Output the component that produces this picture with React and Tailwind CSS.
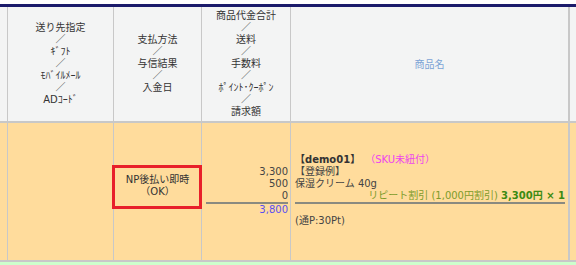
import React from 'react';

const headCols = [
  ['送り先指定', '／', 'ｷﾞﾌﾄ', '／', 'ﾓﾊﾞｲﾙﾒｰﾙ', '／', 'ADｺｰﾄﾞ'],
  ['支払方法', '／', '与信結果', '／', '入金日'],
  ['商品代金合計', '／', '送料', '／', '手数料', '／', 'ﾎﾟｲﾝﾄ･ｸｰﾎﾟﾝ', '／', '請求額'],
];

function HeadCell({ lines, width }) {
  return (
    <div className={`${width} shrink-0 border-r border-[#c8c8c8] flex flex-col items-center justify-center text-center leading-[12px]`}>
      {lines.map((l, i) => (
        <div key={i}>{l}</div>
      ))}
    </div>
  );
}

export default function App() {
  return (
    <div className="w-[576px] h-[265px] overflow-hidden bg-white pt-[4px] font-['DejaVu_Sans','Noto_Sans_CJK_JP',sans-serif] text-[10px] text-[#333]">
      <div className="h-[3px] bg-[#1b1b6b]" />

      {/* header row */}
      <div className="flex h-[116px] bg-[#f3f4f4] border-b-2 border-[#c8c8c8]">
        <div className="w-[8px] shrink-0 border-r border-[#c8c8c8]" />
        <HeadCell lines={headCols[0]} width="w-[106px]" />
        <HeadCell lines={headCols[1]} width="w-[88px]" />
        <HeadCell lines={headCols[2]} width="w-[89px]" />
        <div className="w-[279px] shrink-0 border-r-2 border-[#c8c8c8] flex items-center justify-center text-[#7ba3d6]">
          商品名
        </div>
        <div className="flex-1" />
      </div>

      {/* order row */}
      <div className="flex h-[139px] bg-[#ffdc9c] border-b-2 border-[#c8c8c8] leading-[12px]">
        <div className="w-[8px] shrink-0 border-r border-[#c8c8c8]" />
        <div className="w-[106px] shrink-0 border-r border-[#c8c8c8]" />
        <div className="relative w-[88px] shrink-0 border-r border-[#c8c8c8] pt-[51px] text-center">
          <div>NP後払い即時</div>
          <div>（OK）</div>
          <div className="absolute top-[42px] left-[-2px] right-[-1px] h-[44px] border-[3px] border-[#e8202a]" />
        </div>
        <div className="w-[89px] shrink-0 border-r border-[#c8c8c8] pt-[43px] pl-[4px] pr-[2px] text-right text-[#444]">
          <div>3,300</div>
          <div>500</div>
          <div className="border-b-2 border-[#8a8a80]">0</div>
          <div className="text-[#5a4ff0]">3,800</div>
        </div>
        <div className="w-[279px] shrink-0 border-r-2 border-[#c8c8c8] pt-[31px] pl-[4px] pr-[3px] text-[#444]">
          <div>
            <span className="font-bold text-[#333]">【demo01】</span>
            <span className="ml-[10px] text-[#ee44ee]">（SKU未紐付）</span>
          </div>
          <div>【登録例】</div>
          <div>保湿クリーム 40g</div>
          <div className="text-right border-b-2 border-[#8a8a80] text-[#7d9b2a]">
            リピート割引 (1,000円割引) <span className="font-bold text-[#3b8a12]">3,300円 × 1</span>
          </div>
          <div className="mt-[11px]">(通P:30Pt)</div>
        </div>
        <div className="flex-1" />
      </div>

      <div className="h-[10px] bg-[#ccffcc]" />
    </div>
  );
}
